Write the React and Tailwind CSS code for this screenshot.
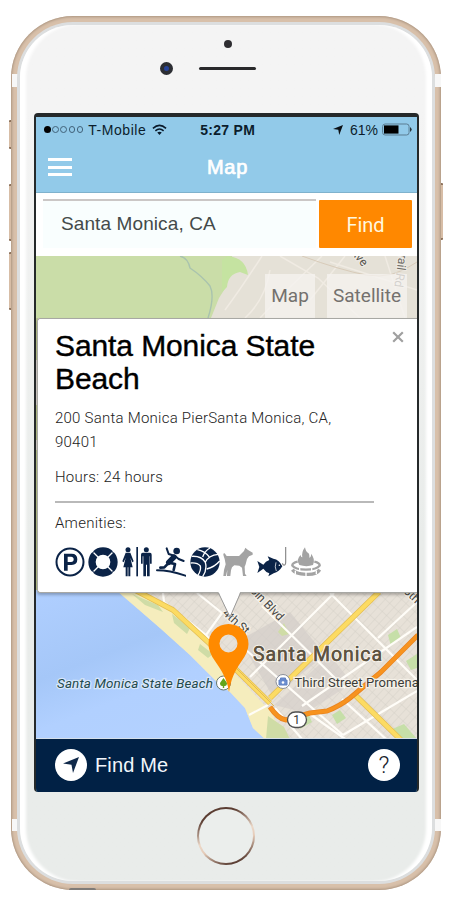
import React from "react";

const NAVY = "#0b2347";
const GREY = "#a3a3a3";

function ArrowIcon({ size, color }) {
  return (
    <svg width={size} height={size} viewBox="0 0 20 20">
      <path d="M20 0 L12.5 20 L10.6 9.6 L0 8 Z" fill={color} />
    </svg>
  );
}

function WifiIcon() {
  return (
    <svg width="15" height="12" viewBox="0 0 16 12" fill="none" stroke="#0a1a2a" strokeWidth="1.7">
      <path d="M1 4.2 Q8 -2 15 4.2" />
      <path d="M3.6 6.9 Q8 3 12.4 6.9" />
      <path d="M5.6 8.7 Q8 6.8 10.4 8.7 L8 11.4 Z" fill="#0a1a2a" stroke="none" />
    </svg>
  );
}

function StatusBar() {
  return (
    <div className="flex h-[25px] items-center pl-[8px] pr-[5px] font-['Liberation_Sans',sans-serif] text-[14px] leading-none text-[#0b1d2c]">
      <div className="flex items-center gap-[1.7px]">
        <span className="h-[6.5px] w-[6.5px] rounded-full bg-black" />
        {[0, 1, 2, 3].map((i) => (
          <span key={i} className="h-[6.5px] w-[6.5px] rounded-full border border-[#41627a]" />
        ))}
      </div>
      <span className="ml-[5px] w-[64px] tracking-[0.55px]">T-Mobile</span>
      <WifiIcon />
      <span className="ml-[33px] w-[133px] font-bold tracking-[0.3px]">5:27 PM</span>
      <ArrowIcon size={10} color="#0b1014" />
      <span className="ml-[7px] w-[32px]">61%</span>
      <svg width="30" height="13" viewBox="0 0 30 13">
        <rect x="0.6" y="1" width="26.5" height="11" rx="2.5" fill="none" stroke="#5b7c92" strokeWidth="1" />
        <rect x="2" y="2.4" width="14.5" height="8.2" fill="#000" />
        <path d="M28.2 4 Q31 6.5 28.2 9 Z" fill="#111" />
      </svg>
    </div>
  );
}

function NavBar() {
  return (
    <div className="flex h-[50px] items-center pl-[12px] text-white">
      <div className="flex w-[24px] flex-col gap-[4.4px]">
        <span className="h-[3px] bg-white" />
        <span className="h-[3px] bg-white" />
        <span className="h-[3px] bg-white" />
      </div>
      <span className="ml-[135px] font-['Liberation_Sans',sans-serif] text-[20px] font-normal leading-none tracking-[0.7px] [-webkit-text-stroke:0.7px_#fff]">Map</span>
    </div>
  );
}

function SearchRow() {
  return (
    <div className="flex h-[64px] border-t border-[#7fb2cd] bg-white pl-[7px] pr-[5px] pt-[6px]">
      <div className="flex h-[49px] w-[273px] items-center border-t-2 border-[#cbc7c6] bg-[#f9fefe] pl-[18px] font-['Liberation_Sans',sans-serif] text-[19px] tracking-[0.1px] text-[#444a4a]">
        <span className="-mt-px">Santa Monica, CA</span>
      </div>
      <div className="ml-[3px] mt-px flex h-[48px] w-[93px] items-center justify-center rounded-[1px] bg-[#ff8800] font-['Roboto',sans-serif] text-[20px] text-[#fff7df]">
        <span className="mt-px">Find</span>
      </div>
    </div>
  );
}

function MapCanvas() {
  return (
    <svg className="absolute left-0 top-0" width="381" height="483" viewBox="36 256 381 483" fontFamily="Roboto, sans-serif">
      <defs>
        <pattern id="blocks" width="11" height="6" patternUnits="userSpaceOnUse" patternTransform="rotate(-47)">
          <rect width="11" height="6" fill="#e7e1d8" />
          <path d="M0 0H11M0 0V6" stroke="#d4cec6" strokeWidth="0.9" />
        </pattern>
        <linearGradient id="sea" x1="0" y1="0" x2="0.6" y2="1">
          <stop offset="0" stopColor="#b0cfff" />
          <stop offset="0.45" stopColor="#a5c7f8" />
          <stop offset="0.7" stopColor="#b1d0ff" />
          <stop offset="1" stopColor="#b3d1ff" />
        </linearGradient>
      </defs>
      <rect x="36" y="256" width="381" height="483" fill="#e5e1d7" />
      <path d="M225 310 Q240 290 262 256M260 318 L285 292 L322 256M280 256 L318 278 L360 318M345 256 L310 300M385 256 L405 318M417 290 L330 262M245 318 Q265 300 270 270" stroke="#f0ebe3" fill="none" strokeWidth="1.5" />
      <path d="M302 256 Q340 270 366 275 T417 262" stroke="#d8cbb9" fill="none" />
      <path d="M36 256H232V272L226 278V287L219 298L211 318H36Z" fill="#cadda8" />
      <path d="M228 256Q246 258 248 275L240 272Q228 274 227 287L222 292V260Z" fill="#c5e3a1" />
      <path d="M180 256 Q188 258 190 268 Q202 276 210 286 Q215 296 208 318" fill="none" stroke="#a9c3ae" strokeWidth="1.4" />
      <path d="M36 318H38V593H36Z" fill="#bac58c" />
      <path d="M36 360H38V405H36ZM36 440H38V450H36Z" fill="#d9d2cc" />
      <g fill="#57564f" stroke="#eeeae3" strokeWidth="2" paintOrder="stroke" fontSize="12">
        <text transform="translate(350 252) rotate(50)">Ave</text>
        <text transform="translate(400 247) rotate(98)" fill="#6d6b65">Trail Rd</text>
      </g>

      <rect x="110" y="590" width="307" height="149" fill="url(#blocks)" />
      <path d="M240 640L290 612L325 655L273 697Z" fill="#d3cdc9" opacity="0.7" />
      <path d="M274 705L330 655L352 683L306 713Z" fill="#d3cdc9" opacity="0.6" />
      <path d="M36 590H116L160 628L190 655L217 682L230 692L245 708L253 728L265 739H36Z" fill="url(#sea)" />
      <path d="M116 590L160 628L190 655L217 682L230 692L245 708L253 728L265 739H283L272 713L240 679L205 643L172 612L141 590Z" fill="#f5edbd" />
      <path d="M132 594L158 605L163 612L145 605ZM172 614L190 628L187 634L174 623ZM200 644L213 654L208 658L198 650ZM268 716L284 727L290 739H266ZM278 632L284 623L289 634L282 636Z" fill="#cfdca6" />
      <path d="M388 635L397 629L401 638L391 646ZM406 661L417 654V668L411 670ZM332 715L340 710L346 718L337 724ZM296 717L307 711L312 722L300 729ZM390 730L404 724L417 739H396Z" fill="#c6dfa8" />
      <g stroke="#fffdf8" fill="none" strokeWidth="2.2">
        <path d="M163 593L164 602L206 635M206 635L222 613L197 593M206 635L213 644" />
        <path d="M334 593L250 677M330 593L417 680M302 706L417 627M262 606L345 688M246 650L343 735M343 735L417 691M310 714L345 739M417 602L378 638M275 708L302 739M268 705L249 715M342 699L386 739" />
      </g>
      <g fill="none" strokeLinejoin="round">
        <path d="M135 590L173 610L209 643L270 703M379 592L270 698M355 695L401 740" stroke="#e3bd52" strokeWidth="5.6" />
        <path d="M135 590L173 610L209 643L270 703M379 592L270 698M355 695L401 740" stroke="#fcdb63" strokeWidth="4.2" />
        <path d="M232 664L274 706" stroke="#dfb957" strokeWidth="1" />
        <path d="M270 707Q278 719 286 720L310 713L327 711Q340 706 350 698L381 672L418 635" stroke="#e98420" strokeWidth="5" />
        <path d="M270 707Q278 719 286 720L310 713L327 711Q340 706 350 698L381 672L418 635" stroke="#f7931f" strokeWidth="3.5" />
      </g>
      <g stroke="#f5f1e9" strokeWidth="2.5" paintOrder="stroke" fill="#484843">
        <text transform="translate(234 575) rotate(46)" fontSize="12">Lincoln Blvd</text>
        <text transform="translate(222 614) rotate(42)" fontSize="12">4th St</text>
        <text transform="translate(403 592) rotate(43)" fontSize="12">6th</text>
        <text x="253" y="661" fontSize="19.5" fill="#5d5341" stroke="#f5f1e9" textLength="129">Santa Monica</text>
        <text x="253" y="661" fontSize="19.5" fill="#5d5341" stroke="#5d5341" strokeWidth="0.3" textLength="129">Santa Monica</text>
        <text x="294.5" y="686.5" fontSize="13" fill="#3c3c38" letterSpacing="0.08">Third Street Promenade</text>
        <text x="57" y="687.5" fontSize="13.5" fontStyle="italic" fill="#234a4c" stroke="#d7e6fb" textLength="156">Santa Monica State Beach</text>
      </g>
      <circle cx="283" cy="681.5" r="7" fill="#fff" stroke="#8a8f99" strokeWidth="1" />
      <path d="M279 680H287V685H279ZM280.5 680V678H285.5V680" fill="#6d8fd0" stroke="#5f80c3" strokeWidth="1" />
      <circle cx="283" cy="682.5" r="1.3" fill="#fff" />
      <rect x="287.5" y="712" width="19" height="15.5" rx="7.7" fill="#fff" stroke="#4f4f4f" strokeWidth="1.3" />
      <text x="293.3" y="724" fontSize="12" fill="#333">1</text>
      <circle cx="223.5" cy="683" r="7" fill="#fff" stroke="#65756c" strokeWidth="1" />
      <path d="M223.5 678L227 683Q227 686.500 224.2 686V688H222.8V686Q220 686.500 220 683Z" fill="#65a51c" />
      <path fillRule="evenodd" d="M229 692C227 679 222 671 215 661Q208.500 652 208.500 644A20 20 0 0 1 248.500 644Q248.500 652 241 662C234 672 231 680 229 692ZM228.500 634.500A9 9 0 1 0 228.500 652.500A9 9 0 1 0 228.500 634.500Z" fill="#ff8a00" />
      <path d="M36 738.500H417" stroke="#d5dfe9" strokeWidth="1" />
    </svg>
  );
}

function Icon({ children }) {
  return (
    <svg width="30" height="30" viewBox="0 0 90 90">
      {children}
    </svg>
  );
}

function Amenities() {
  return (
    <div className="ml-[-0.5px] mt-[11px] flex gap-[3.8px]">
      <Icon>
        <circle cx="45" cy="45" r="40.500" fill="none" stroke={NAVY} strokeWidth="6" />
        <path fillRule="evenodd" d="M27 20H50Q67 20 67 37T50 54H38V71H27ZM38 29V45H48Q56 45 56 37T48 29Z" fill={NAVY} />
      </Icon>
      <Icon>
        <circle cx="45" cy="45" r="33" fill="none" stroke={NAVY} strokeWidth="22" />
        <path d="M12 12L33 33M78 12L57 33M12 78L33 57M78 78L57 57" stroke="#fff" strokeWidth="4" />
        <path d="M20 12L12 20M70 12L78 20M20 78L12 70M70 78L78 70" stroke={NAVY} strokeWidth="3" />
      </Icon>
      <Icon>
        <g fill={NAVY}>
          <circle cx="18" cy="8" r="7.500" />
          <path d="M11 17H25L35 43L31 46L25 32L32 61H25V88H19V61H17V88H11V61H4L11 32L5 46L1 43Z" />
          <rect x="43" y="0" width="5" height="88" />
          <circle cx="73" cy="8" r="7.500" />
          <path d="M62 17H84Q89 17 89 23V50H84V28H83V88H75V53H72V88H64V28H62V50H57V23Q57 17 62 17Z" />
        </g>
      </Icon>
      <Icon>
        <circle cx="62" cy="12" r="10" fill={NAVY} />
        <g fill="none" stroke={NAVY} strokeLinejoin="round" strokeLinecap="round">
          <path d="M32 4L38 21L57 27L68 36L83 42" strokeWidth="6" />
          <path d="M54 30L38 46" strokeWidth="16" />
          <path d="M38 47L57 51L53 69M36 50L25 61L13 62" strokeWidth="8" />
          <path d="M3 70Q40 70 88 86" strokeWidth="6" />
        </g>
      </Icon>
      <Icon>
        <circle cx="45" cy="45" r="44" fill={NAVY} />
        <g fill="none" stroke="#fff" strokeWidth="4">
          <path d="M5 28Q34 26 46 46Q52 68 38 89M46 46Q56 24 85 22" />
          <path d="M22 8Q44 12 58 30M38 30Q44 12 60 3" />
          <path d="M2 48Q22 46 31 57Q34 70 24 84" />
          <path d="M50 66Q74 60 89 42" />
        </g>
      </Icon>
      <Icon>
        <path d="M2 27Q-1 18 5 19L11 27H48L63 12L67 2L74 8L89 17V23L78 28L72 36L68 52L65 59L66 80L71 87H60L57 62L49 56L34 55L27 61L24 70L22 87H12L13 68L9 87H1L3 69L8 52L5 36Z" fill={GREY} />
      </Icon>
      <Icon>
        <path d="M1 42L19 53Q26 43 37 39L32 28L49 35Q67 38 76 58Q67 74 50 79L34 88L37 79Q26 75 19 65L1 78L7 60Z" fill={NAVY} />
        <path d="M57 46Q52 60 58 72" stroke="#fff" strokeWidth="2.200" fill="none" />
        <circle cx="67" cy="55" r="2.200" fill="#fff" />
        <path d="M86 0V46Q86 56 79 54L76 49" stroke="#888" strokeWidth="3.500" fill="none" />
      </Icon>
      <Icon>
        <path d="M25 54Q14 38 29 24Q30 32 34 31Q31 15 42 1Q44 15 54 20Q56 28 55 32Q61 30 60 20Q74 36 66 54Q47 61 25 54Z" fill={GREY} />
        <g fill="none" stroke={GREY}>
          <path d="M20 44Q3 48 4 56Q13 68 45 68T86 56Q87 48 70 44" strokeWidth="7" />
          <path d="M4 68Q13 80 45 82T86 68" strokeWidth="10" />
        </g>
        <path d="M26 60V74M62 60V74M13 71V82M45 73V90M76 71V82" stroke="#fff" strokeWidth="4" />
      </Icon>
    </div>
  );
}

function InfoCard() {
  return (
    <div className="relative ml-[1px] h-[275px] rounded-l-[3px] border border-r-0 border-[#a8a8a4] bg-white pl-[17px] pt-[10px] font-['Roboto',sans-serif] text-[15px] font-light tracking-[0.24px] text-[#222] shadow-[0_2px_3px_rgba(0,0,0,0.25)]">
      <svg className="absolute right-[13px] top-[12px]" width="12" height="12" viewBox="0 0 12 12">
        <path d="M1.200 1.200L10.800 10.800M10.800 1.200L1.200 10.800" stroke="#a0a0a0" strokeWidth="2.200" />
      </svg>
      <h1 className="w-[300px] font-['Liberation_Sans',sans-serif] text-[30px] font-normal leading-[33px] tracking-[-0.1px] text-black [-webkit-text-stroke:0.4px_#000]">
        Santa Monica State Beach
      </h1>
      <p className="mt-[11px] w-[300px] leading-[24px]">200 Santa Monica PierSanta Monica, CA, 90401</p>
      <p className="mt-[11px] leading-[24px]">Hours: 24 hours</p>
      <div className="mt-[12px] h-[2px] w-[319px] bg-[#b9b9b9]" />
      <p className="mt-[8px] leading-[24px]">Amenities:</p>
      <div className="pt-px">
        <Amenities />
      </div>
    </div>
  );
}

function MapSection() {
  return (
    <div className="relative h-[483px] overflow-hidden">
      <div className="relative z-10">
        <div className="flex h-[62px] justify-end gap-[12px] pr-[10px] pt-[18px] font-['Roboto',sans-serif] text-[19px] text-[#74716e]">
          <div className="flex w-[50px] items-center justify-center bg-[#f5f3f0]/75">Map</div>
          <div className="flex w-[80px] items-center justify-center bg-[#f5f3f0]/75">Satellite</div>
        </div>
        <InfoCard />
      </div>
      <MapCanvas />
      <svg className="absolute left-[180px] top-[334px] z-20" width="28" height="30" viewBox="0 0 28 30">
        <path d="M1.500 0L14 27L25 0Z" fill="#fff" />
        <path d="M2.500 3L14 27L24.500 3" fill="none" stroke="#9b9b9b" strokeWidth="1" />
      </svg>
    </div>
  );
}

function BottomBar() {
  return (
    <div className="flex h-[53px] items-center bg-[#012145] pb-px pl-[19px] pr-[17px] font-['Roboto',sans-serif]">
      <div className="flex h-[32px] w-[32px] items-center justify-center rounded-full bg-white">
        <ArrowIcon size={16} color="#10294a" />
      </div>
      <span className="ml-[8px] font-['Liberation_Sans',sans-serif] text-[20px] leading-none tracking-[0.15px] text-[#f2f6fb]">Find Me</span>
      <div className="ml-auto flex h-[32px] w-[32px] items-center justify-center rounded-full bg-white text-[24px] font-light text-[#18212c]">
        ?
      </div>
    </div>
  );
}

export default function App() {
  return (
    <div className="relative h-[897px] w-[453px] overflow-hidden bg-white pl-[11px] pt-[16px]">
      <span className="absolute left-[9px] top-[120px] h-[29px] w-[3px] rounded-l-[1px] border-y-2 border-[#8e735d] bg-[#d7bda6]" />
      <span className="absolute left-[9px] top-[184px] h-[57px] w-[3px] rounded-l-[1px] border-y-2 border-[#8e735d] bg-[#d7bda6]" />
      <span className="absolute left-[9px] top-[252px] h-[58px] w-[3px] rounded-l-[1px] border-y-2 border-[#8e735d] bg-[#d7bda6]" />
      <span className="absolute left-[440px] top-[183px] h-[57px] w-[3px] rounded-r-[1px] border-y-2 border-[#8e735d] bg-[#d7bda6]" />
      <div className="relative h-[874px] w-[430px] rounded-[62px] bg-[#d8c0aa] p-[6px] shadow-[inset_0_0_3px_0.5px_#9b8571]">
        <span className="absolute left-[1px] top-[58px] h-[13px] w-[6px] bg-[#f7f7f7]" />
        <span className="absolute right-0 top-[58px] h-[13px] w-[6px] bg-[#f7f7f7]" />
        <span className="absolute left-[1px] top-[803px] h-[12px] w-[6px] bg-[#f7f7f7]" />
        <span className="absolute right-0 top-[803px] h-[12px] w-[6px] bg-[#f7f7f7]" />
        <span className="absolute bottom-0 left-[58px] h-[2px] w-[27px] rounded-t-full bg-[#7f7b78]" />
        <div className="relative h-full w-full rounded-[56px] bg-[#dcdedf] p-[3px]">
          <div className="flex h-full w-full flex-col rounded-[53px] bg-gradient-to-b from-[#f4f4f4] from-10% to-[#e9ecea] to-60% pl-[14px] shadow-[inset_7px_0_3px_-1px_#fff,inset_-7px_0_3px_-1px_#fff]">
            <div className="flex h-[88px] flex-col pl-[126px] pt-[15px]">
              <span className="ml-[63.500px] h-[8px] w-[8px] rounded-full bg-[#2e2d31]" />
              <div className="mt-[14px] flex items-center">
                <span className="h-[13px] w-[13px] rounded-full border-[4px] border-[#2c2e33] bg-[#26439a]" />
                <span className="ml-[26px] h-[3px] w-[57px] rounded-full bg-[#29292b]" />
              </div>
            </div>
            <div className="h-[679px] w-[385px] shrink-0 overflow-hidden rounded-[4px] border-x-2 border-t-4 border-[#25292a] bg-[#92cae9]">
              <StatusBar />
              <NavBar />
              <SearchRow />
              <MapSection />
              <BottomBar />
            </div>
            <div className="ml-[163px] mt-[15px] h-[58px] w-[58px] rounded-full bg-[linear-gradient(160deg,#5b3d32_0%,#5b3d32_20%,#ecd8c8_50%,#e5cbb8_62%,#4f3228_90%)] p-[2px]">
              <div className="h-full w-full rounded-full bg-[#ebeeec]" />
            </div>
          </div>
        </div>
      </div>
    </div>
  );
}
